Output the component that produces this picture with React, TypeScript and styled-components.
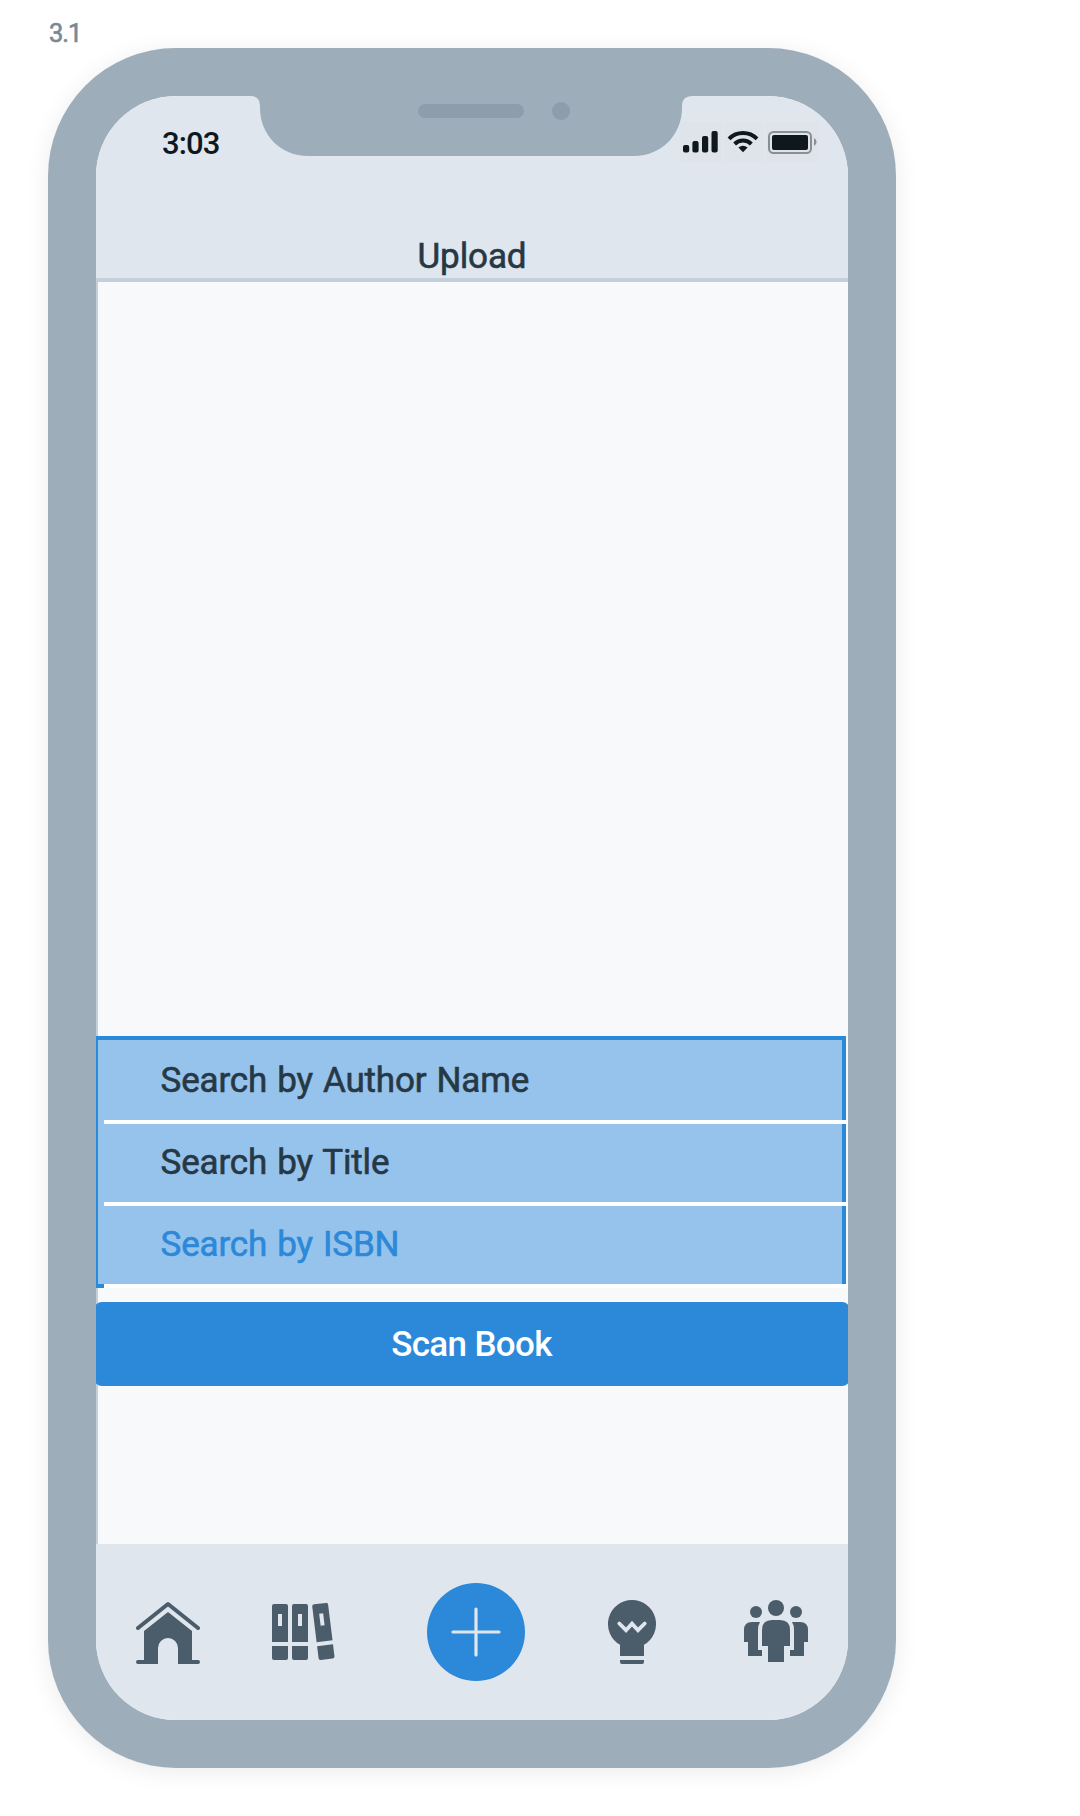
import React from 'react';
import styled, { createGlobalStyle } from 'styled-components';

const c = {
  blue: '#2c88d9',
  blueLight: '#96c3eb',
  frame: '#9eadba',
  frameDark: '#8e9dac',
  bar: '#dfe6ed',
  line: '#c3cfd9',
  body: '#f8f9fb',
  icon: '#4b5c6b',
  ink: '#273845',
  label: '#788896',
  status: '#0f171f',
};

const GlobalStyle = createGlobalStyle`
  * { box-sizing: border-box; }
  body {
    margin: 0;
    background: #fff;
    font-family: Roboto, 'Liberation Sans', sans-serif;
  }
`;

const Page = styled.main`
  width: 1080px;
  height: 1816px;
  padding: 18px 0 0 48px;
  overflow: hidden;
`;

const FrameLabel = styled.div`
  height: 30px;
  padding-left: 1px;
  font-size: 25.5px;
  line-height: 30px;
  letter-spacing: -1px;
  color: ${c.label};
  -webkit-text-stroke: 0.6px ${c.label};
`;

const Phone = styled.section`
  width: 848px;
  height: 1720px;
  padding: 48px;
  border-radius: 128px;
  background: ${c.frame};
  box-shadow: 0 4px 24px rgba(0, 0, 0, 0.08);
`;

const Screen = styled.div`
  position: relative;
  display: flex;
  flex-direction: column;
  height: 1624px;
  border-radius: 80px;
  overflow: hidden;
  background: ${c.body};
`;

const NotchShape = styled.svg`
  position: absolute;
  top: 0;
  left: 154px;
  display: block;
`;

const Header = styled.header`
  height: 186px;
  padding-top: 26px;
  background: ${c.bar};
  border-bottom: 4px solid ${c.line};
`;

const StatusBar = styled.div`
  display: flex;
  justify-content: space-between;
  height: 40px;
  padding: 0 30px 0 66px;
`;

const Time = styled.div`
  padding-top: 3px;
  font-size: 31px;
  font-weight: 500;
  line-height: 37px;
  letter-spacing: -0.9px;
  color: ${c.status};
`;

const StatusIcons = styled.div`
  display: flex;
  gap: 2px;
  height: 40px;

  svg {
    display: block;
    background: #dfe4eb;
  }
`;

const Title = styled.h1`
  margin: 74px 0 0;
  text-align: center;
  font-size: 35px;
  font-weight: 400;
  line-height: 41px;
  letter-spacing: -0.1px;
  color: ${c.ink};
  -webkit-text-stroke: 0.6px ${c.ink};
`;

const Content = styled.div`
  flex: 1;
  padding-top: 754px;
  border-left: 2px solid ${c.line};
`;

const SearchList = styled.ul`
  list-style: none;
  margin: 0 2px 0 -2px;
  padding: 0;
  height: 252px;
  background: ${c.blueLight};
  border: solid ${c.blue};
  border-width: 4px 4px 4px 2px;
`;

const SearchRow = styled.li<{ $tall?: boolean; $active?: boolean }>`
  height: ${p => (p.$tall ? 84 : 82)}px;
  padding-top: ${p => (p.$tall ? 20 : 18)}px;
  margin: 0 -6px 0 6px;
  border-bottom: 4px solid #fff;
  padding-left: 56.5px;
  font-size: 35px;
  line-height: 41px;
  letter-spacing: -0.15px;
  word-spacing: 1.5px;
  color: ${p => (p.$active ? c.blue : c.ink)};
  -webkit-text-stroke: 0.6px ${p => (p.$active ? c.blue : c.ink)};
`;

const ScanButton = styled.button`
  display: block;
  width: 756px;
  height: 84px;
  margin: 14px 0 0 -4px;
  padding: 1px 1px 0 0;
  border: 0;
  border-radius: 8px;
  background: ${c.blue};
  color: #fff;
  font: 500 35px/41px Roboto, 'Liberation Sans', sans-serif;
  letter-spacing: -0.65px;
`;

const Nav = styled.nav`
  display: flex;
  align-items: center;
  height: 176px;
  padding-left: 40px;
  background: ${c.bar};
`;

const NavItem = styled.a<{ $gap?: number }>`
  display: block;
  margin-left: ${p => p.$gap ?? 0}px;
  color: ${c.icon};

  svg { display: block; }
`;

const AddButton = styled(NavItem)`
  border-radius: 50%;
  background: ${c.blue};
  color: ${c.bar};
`;

const Notch = () => (
  <NotchShape width="442" height="60" viewBox="0 0 442 60">
    <path d="M0 0Q10 0 10 10v2c0 27 21 48 48 48H384c27 0 48-21 48-48v-2q0-10 10-10z" fill={c.frame} />
    <rect x="168" y="8" width="106" height="14" rx="7" fill={c.frameDark} />
    <circle cx="311" cy="15" r="9" fill={c.frameDark} />
  </NotchShape>
);

const SignalIcon = () => (
  <svg width="42" height="40" viewBox="680 122 42 40" fill={c.status}>
    <rect x="683" y="145" width="6.2" height="7.5" rx="2" />
    <rect x="692.4" y="141" width="6.2" height="11.5" rx="2" />
    <rect x="702" y="136" width="6.2" height="16.5" rx="2" />
    <rect x="711.5" y="131" width="6.2" height="21.5" rx="2" />
  </svg>
);

const WifiIcon = () => (
  <svg width="40" height="40" viewBox="724 122 40 40">
    <g fill="none" stroke={c.status} strokeWidth="4">
      <path d="M729 138.9a19.6 19.6 0 0 1 28 0" />
      <path d="M734.6 144a12 12 0 0 1 16.8 0" />
    </g>
    <path d="M738.4 147.6q4.6-3.6 9.2 0L743 152.3z" fill={c.status} />
  </svg>
);

const BatteryIcon = () => (
  <svg width="52" height="40" viewBox="766 122 52 40">
    <rect x="769" y="132" width="42" height="21" rx="4.5" fill="none" stroke="#8b8f95" strokeWidth="2" />
    <rect x="772" y="135" width="36" height="15" rx="2" fill={c.status} />
    <path d="M814 138q2.6 1.4 2.6 4t-2.6 4z" fill="#8b8f95" />
  </svg>
);

const HomeIcon = () => (
  <svg width="64" height="64" fill="currentColor">
    <path d="M2 28 32 4 62 28" fill="none" stroke="currentColor" strokeWidth="4" strokeLinecap="round" strokeLinejoin="round" />
    <path d="M32 12 56 31v29h6q2 0 2 2t-2 2H42V48a10 10 0 0 0-20 0v16H2q-2 0-2-2t2-2h6V31z" />
  </svg>
);

const Binder = () => (
  <>
    <path fillRule="evenodd" d="M2 0h12q2 0 2 2v36H0V2q0-2 2-2zM6 10v12h4V10z" />
    <path d="M0 42h16v12q0 2-2 2H2q-2 0-2-2z" />
  </>
);

const BooksIcon = () => (
  <svg width="64" height="64" fill="currentColor">
    <g transform="translate(0 4)"><Binder /></g>
    <g transform="translate(20 4)"><Binder /></g>
    <g transform="translate(40 4.6) rotate(-7)"><Binder /></g>
  </svg>
);

const AddIcon = () => (
  <svg width="98" height="98">
    <path d="M26 49h46M49 26v46" stroke="currentColor" strokeWidth="3.2" strokeLinecap="round" />
  </svg>
);

const BulbIcon = () => (
  <svg width="64" height="64" fill="currentColor">
    <path d="M32 0a24 24 0 0 1 12 44.8V56H20V44.8A24 24 0 0 1 32 0z" />
    <path d="M20 60h24v2q0 2-2 2H22q-2 0-2-2z" />
    <path d="M19.3 23.5 26 30.2l6-6.6 6 6.6 6.7-6.7" fill="none" stroke={c.bar} strokeWidth="3.8" strokeLinecap="round" />
  </svg>
);

const PeopleIcon = () => (
  <svg width="64" height="64" fill="currentColor">
    <circle cx="12" cy="12" r="6" />
    <circle cx="52" cy="12" r="6" />
    <circle cx="32" cy="8" r="8" />
    <path d="M28 20h8q10 0 10 10v16h-6v16H24V46h-6V30q0-10 10-10z" />
    <path d="M16 22H8q-8 0-8 8v12h4v14h14v-6h-4V30q0-5 2-8z" />
    <path d="M48 22h8q8 0 8 8v12h-4v14H46v-6h4V30q0-5-2-8z" />
  </svg>
);

export default function App() {
  return (
    <>
      <GlobalStyle />
      <Page>
        <FrameLabel>3.1</FrameLabel>
        <Phone>
          <Screen>
            <Header>
              <StatusBar>
                <Time>3:03</Time>
                <StatusIcons>
                  <SignalIcon />
                  <WifiIcon />
                  <BatteryIcon />
                </StatusIcons>
              </StatusBar>
              <Title>Upload</Title>
            </Header>
            <Content>
              <SearchList>
                <SearchRow $tall>Search by Author Name</SearchRow>
                <SearchRow>Search by Title</SearchRow>
                <SearchRow $active>Search by ISBN</SearchRow>
              </SearchList>
              <ScanButton>Scan Book</ScanButton>
            </Content>
            <Nav>
              <NavItem><HomeIcon /></NavItem>
              <NavItem $gap={72}><BooksIcon /></NavItem>
              <AddButton $gap={91}><AddIcon /></AddButton>
              <NavItem $gap={75}><BulbIcon /></NavItem>
              <NavItem $gap={80}><PeopleIcon /></NavItem>
            </Nav>
            <Notch />
          </Screen>
        </Phone>
      </Page>
    </>
  );
}
